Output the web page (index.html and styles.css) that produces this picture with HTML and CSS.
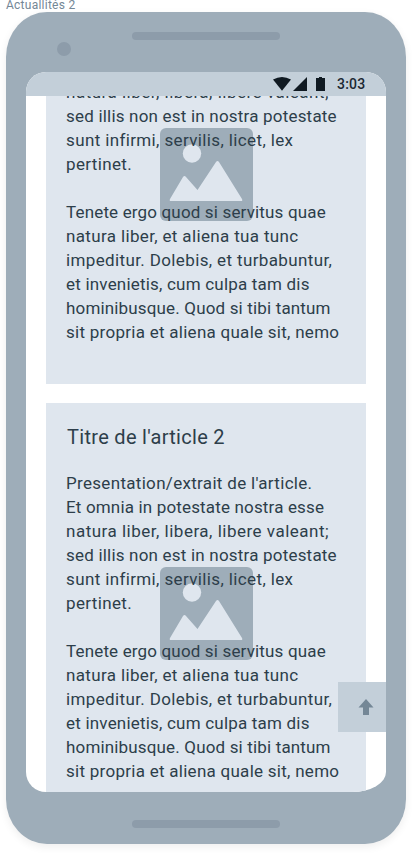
FILE: index.html
```html
<!DOCTYPE html>
<html lang="fr">
<head>
<meta charset="utf-8">
<title>Actuallités 2</title>
<link rel="stylesheet" href="styles.css">
</head>
<body>
<div class="label">Actuallités 2</div>
<main class="phone">
  <header class="phone-top"><i class="camera"></i><i class="speaker"></i></header>
  <section class="screen">
    <div class="status">
      <svg class="status-icons" width="54" height="16" viewBox="0 0 54 16"><path d="M0 3.5Q9 -1.7 18 3.5L9 14.7Z"/><path d="M34 1V15H20Z"/><path d="M43 2H46V1H49V2H52V15H43Z"/></svg>
      <span class="time">3:03</span>
    </div>
    <div class="feed">
      <article class="card card-scrolled">
        <svg class="picture" width="93" height="93" viewBox="0 0 93 93"><rect class="frame" width="93" height="93" rx="6"/><circle class="shape" cx="32" cy="25.5" r="9.2"/><path class="shape" d="M11 73Q9 73 10 71L23 49Q24.500 47 26 49L37.500 62L56 34Q57.500 32 59 34L82 71Q83 73 81 73Z"/></svg>
        <p class="text">
          <span class="line l3">natura liber, libera, libere valeant;</span>
          <span class="line l4">sed illis non est in nostra potestate</span>
          <span class="line l5">sunt infirmi, servilis, licet, lex</span>
          <span class="line l6">pertinet.</span>
        </p>
        <p class="text">
          <span class="line l7">Tenete ergo quod si servitus quae</span>
          <span class="line l8">natura liber, et aliena tua tunc</span>
          <span class="line l9">impeditur. Dolebis, et turbabuntur,</span>
          <span class="line l10">et invenietis, cum culpa tam dis</span>
          <span class="line l11">hominibusque. Quod si tibi tantum</span>
          <span class="line l12">sit propria et aliena quale sit, nemo</span>
        </p>
      </article>
      <article class="card">
        <svg class="picture" width="93" height="93" viewBox="0 0 93 93"><rect class="frame" width="93" height="93" rx="6"/><circle class="shape" cx="32" cy="25.5" r="9.2"/><path class="shape" d="M11 73Q9 73 10 71L23 49Q24.500 47 26 49L37.500 62L56 34Q57.500 32 59 34L82 71Q83 73 81 73Z"/></svg>
        <h2 class="title">Titre de l'article 2</h2>
        <p class="text">
          <span class="line l1">Presentation/extrait de l'article.</span>
          <span class="line l2">Et omnia in potestate nostra esse</span>
          <span class="line l3">natura liber, libera, libere valeant;</span>
          <span class="line l4">sed illis non est in nostra potestate</span>
          <span class="line l5">sunt infirmi, servilis, licet, lex</span>
          <span class="line l6">pertinet.</span>
        </p>
        <p class="text">
          <span class="line l7">Tenete ergo quod si servitus quae</span>
          <span class="line l8">natura liber, et aliena tua tunc</span>
          <span class="line l9">impeditur. Dolebis, et turbabuntur,</span>
          <span class="line l10">et invenietis, cum culpa tam dis</span>
          <span class="line l11">hominibusque. Quod si tibi tantum</span>
          <span class="line l12">sit propria et aliena quale sit, nemo</span>
        </p>
      </article>
    </div>
    <button class="to-top" aria-label="Haut de page"><svg width="16" height="16" viewBox="0 0 16 16"><path d="M8 0L15.500 8.500H11V16H5V8.500H.5Z"/></svg></button>
  </section>
  <footer class="phone-bottom"><i class="speaker"></i></footer>
</main>
</body>
</html>
```

FILE: styles.css
```css
* { box-sizing: border-box; }
body { margin: 0; height: 853px; overflow: hidden; background: #fff; color: #2d3e4a; font-family: Roboto, "Liberation Sans", sans-serif; }
.label { height: 12px; padding-left: 6px; font-size: 12px; line-height: 10px; letter-spacing: .25px; color: #748796; white-space: nowrap; }
.phone { width: 400px; height: 832px; margin-left: 6px; padding: 0 20px; border-radius: 41px / 45px; background: #9eadb9; box-shadow: 0 3px 8px rgba(0, 0, 0, .07); }
.phone-top { position: relative; height: 60px; padding-top: 20px; }
.phone-bottom { height: 52px; padding-top: 28px; }
.speaker { display: block; width: 148px; height: 8px; margin: 0 auto; border-radius: 4px; background: #8d9caa; }
.camera { position: absolute; left: 31px; top: 30px; width: 14px; height: 14px; border-radius: 50%; background: #8d9caa; }
.screen { position: relative; width: 360px; height: 720px; overflow: hidden; border-radius: 20px 20px 34px 20px / 20px 20px 20px 20px; background: #fff; }
.status { height: 24px; padding-right: 20px; display: flex; align-items: center; justify-content: flex-end; gap: 10px; background: #c3cfd9; }
.status-icons { fill: #101a22; }
.time { width: 29px; font-size: 14px; font-weight: 500; line-height: 24px; letter-spacing: .2px; color: #1b2833; white-space: nowrap; }
.feed { height: 696px; padding: 0 20px; overflow: hidden; }
.card { display: flow-root; position: relative; height: 420px; margin-bottom: 19px; padding: 20px 0 0 20px; background: #dfe6ee; }
.card-scrolled { height: 288px; padding-top: 0; }
.card-scrolled .text:first-of-type { margin-top: -16px; }
.picture { position: absolute; left: 113.500px; top: 163.500px; }
.card-scrolled .picture { top: 31.500px; }
.frame { fill: #9eadb9; }
.shape { fill: #dfe6ee; }
.title { margin: 0 0 20px 1px; font-size: 20px; font-weight: 400; line-height: 28px; letter-spacing: .3px; white-space: nowrap; }
.text { position: relative; margin: 0 0 24px; font-size: 17px; line-height: 24px; }
.line { display: block; width: max-content; white-space: nowrap; }
.l1 { letter-spacing: .31px; }
.l2 { letter-spacing: .16px; }
.l3 { letter-spacing: .5px; }
.l4 { letter-spacing: .2px; }
.l5 { letter-spacing: .37px; }
.l6 { letter-spacing: .35px; }
.l7 { letter-spacing: .16px; }
.l8 { letter-spacing: .35px; }
.l9 { letter-spacing: .37px; }
.l10 { letter-spacing: .2px; }
.l11 { letter-spacing: .16px; }
.l12 { letter-spacing: .27px; }
.to-top { position: absolute; right: 0; top: 610px; width: 48px; height: 50px; padding: 0 0 0 8px; border: 0; display: flex; align-items: center; justify-content: center; background: #c3cfd9; }
.to-top svg { fill: #748796; }
```
